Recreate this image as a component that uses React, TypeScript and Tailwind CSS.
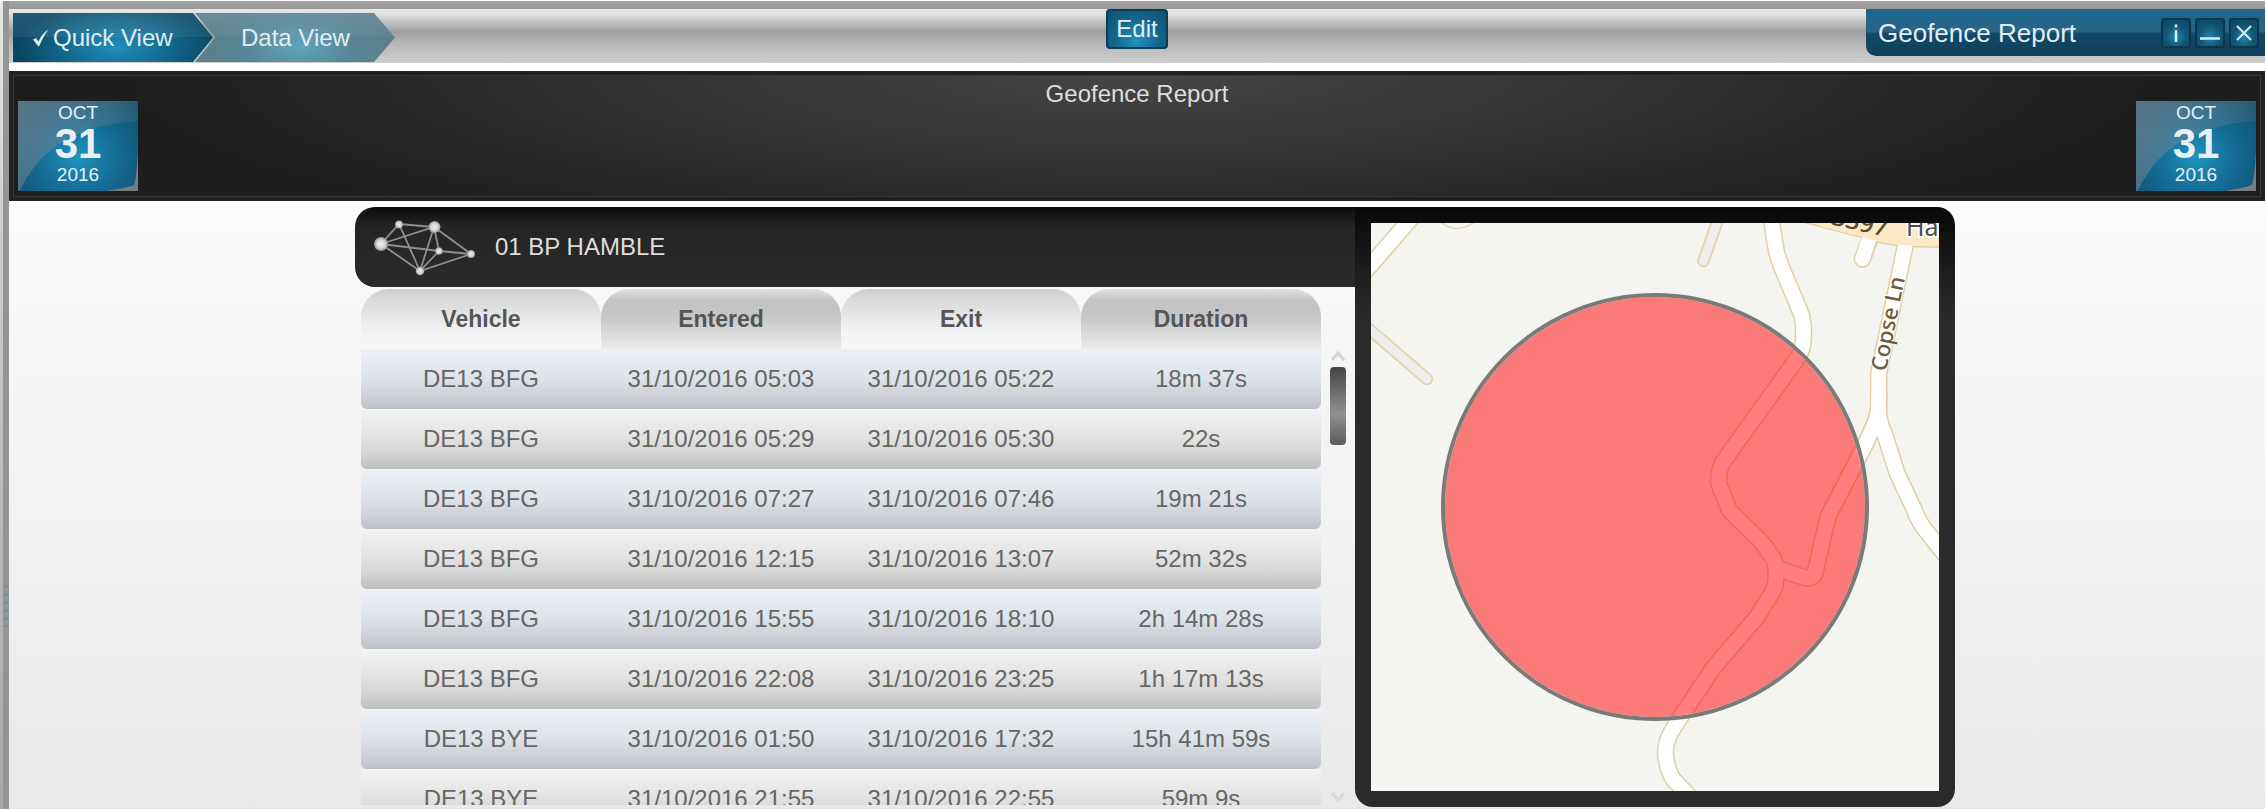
import React from "react";

type Stay = { vehicle: string; entered: string; exit: string; duration: string };

const stays: Stay[] = [
  { vehicle: "DE13 BFG", entered: "31/10/2016 05:03", exit: "31/10/2016 05:22", duration: "18m 37s" },
  { vehicle: "DE13 BFG", entered: "31/10/2016 05:29", exit: "31/10/2016 05:30", duration: "22s" },
  { vehicle: "DE13 BFG", entered: "31/10/2016 07:27", exit: "31/10/2016 07:46", duration: "19m 21s" },
  { vehicle: "DE13 BFG", entered: "31/10/2016 12:15", exit: "31/10/2016 13:07", duration: "52m 32s" },
  { vehicle: "DE13 BFG", entered: "31/10/2016 15:55", exit: "31/10/2016 18:10", duration: "2h 14m 28s" },
  { vehicle: "DE13 BFG", entered: "31/10/2016 22:08", exit: "31/10/2016 23:25", duration: "1h 17m 13s" },
  { vehicle: "DE13 BYE", entered: "31/10/2016 01:50", exit: "31/10/2016 17:32", duration: "15h 41m 59s" },
  { vehicle: "DE13 BYE", entered: "31/10/2016 21:55", exit: "31/10/2016 22:55", duration: "59m 9s" },
];

const headings = ["Vehicle", "Entered", "Exit", "Duration"];

const lightTab = "bg-[linear-gradient(#cfcfcf,#e4e4e4_40%,#f3f3f3_70%,#f8f8f8)]";
const darkTab = "bg-[linear-gradient(#e2e2e2,#c2c2c2_20%,#c6c6c6_45%,#ebebeb)]";
const blueRow = "bg-[linear-gradient(#edf0f6,#dde3e8_50%,#cfd2d8_75%,#bfc2ca)]";
const grayRow = "bg-[linear-gradient(#f2f2f2,#e4e4e4_45%,#d3d3d3_75%,#bfbfbf)]";

function Toolbar() {
  return (
    <header className="grid h-[54px] grid-cols-[1fr_auto_1fr] items-start bg-[linear-gradient(#e9e9e9,#dcdcdc_12%,#9f9f9f_42%,#b4b4b4_60%,#cfcfcf)]">
      <nav className="flex pt-1 pl-1">
        <button className="flex h-[49px] w-[200px] items-center pl-5 text-2xl text-[#e3edf2] [clip-path:polygon(0_0,180px_0,100%_50%,180px_100%,0_100%)] bg-[linear-gradient(#ffffff1a,#ffffff12_50%,transparent_50%),radial-gradient(ellipse_100px_44px_at_52%_70%,#1f8fbb,#13678c_55%,#0a4562)]">
          <svg viewBox="0 0 16 18" className="mr-1 h-[18px] w-4" aria-hidden="true">
            <path d="M0 10.5 L3 9 L5.4 12.5 C8 7 11 3 15.5 0.5 C11.5 5.5 9 10.500 6.300 17 L5 17 Z" fill="#e3edf2" />
          </svg>
          Quick View
        </button>
        <button className="-ml-[18px] flex h-[49px] w-[200px] items-center pl-[46px] text-2xl text-[#e3edf2] [clip-path:polygon(0_0,179px_0,100%_50%,179px_100%,0_100%,20px_50%)] bg-[linear-gradient(#ffffff1a,#ffffff0a_50%,transparent_50%),radial-gradient(ellipse_90px_44px_at_52%_70%,#5fa5ba,#578698_60%,#5b7f8c)]">
          Data View
        </button>
      </nav>
      <button className="h-10 w-[62px] rounded-[4px] border-2 border-[#0a3c55] bg-[radial-gradient(ellipse_at_50%_85%,#1f93c0,#14658a_55%,#0f5070)] text-2xl leading-9 text-[#e3edf2]">
        Edit
      </button>
      <div className="flex h-[47px] w-[399px] items-center justify-between justify-self-end rounded-bl-[10px] bg-[linear-gradient(#1c668f,#2a6485_48%,#0f4a6b_52%,#103f59)] pr-[6px] pl-3">
        <h1 className="text-[26px] leading-none text-[#e3edf2]">Geofence Report</h1>
        <div className="flex gap-1">
          {(["Information", "Minimise", "Close"] as const).map((label) => (
            <button
              key={label}
              aria-label={label}
              className="size-[30px] rounded-[3px] border-2 border-[#0b364b] bg-[radial-gradient(circle_at_50%_65%,#1f86ae,#125775_50%,#0e4560)]"
            >
              <svg viewBox="0 0 26 26" className="size-full" fill="none" stroke="#dcebf2" strokeWidth="2">
                {label === "Information" && <path d="M13 10 V22 M13 4.500 V7.500" strokeWidth="2.5" />}
                {label === "Minimise" && <path d="M3 18.500 H23" strokeWidth="2.500" />}
                {label === "Close" && <path d="M6 6 L20 20 M20 6 L6 20" />}
              </svg>
            </button>
          ))}
        </div>
      </div>
    </header>
  );
}

function DateCard({ id }: { id: string }) {
  return (
    <button className="relative h-[90px] w-[120px] bg-[radial-gradient(ellipse_at_50%_62%,#1e94c0,#15709a_40%,#0f4c69)] text-[#e8f0f4]">
      <svg viewBox="0 0 120 90" className="absolute inset-0 size-full" aria-hidden="true">
        <defs>
          <linearGradient id={id} x1="0" y1="0" x2="1" y2="0.4">
            <stop offset="0" stopColor="#8a8f94" stopOpacity="0.6" />
            <stop offset="1" stopColor="#8a8f94" stopOpacity="0.12" />
          </linearGradient>
        </defs>
        <path d="M0 0 H120 V20 C60 24 22 46 2 90 H0 Z" fill={`url(#${id})`} />
        <path d="M120 50 C119 68 118 78 116 84 C108 87 98 88 88 90 H120 Z" fill="#8a8583" fillOpacity="0.85" />
      </svg>
      <span className="relative flex flex-col items-center pb-1">
        <span className="text-[19px] leading-[20px]">OCT</span>
        <span className="text-[42px] leading-[42px] font-bold">31</span>
        <span className="text-[19px] leading-[20px]">2016</span>
      </span>
    </button>
  );
}

function NetworkIcon() {
  return (
    <svg viewBox="0 0 104 60" className="h-[60px] w-[104px]" aria-hidden="true">
      <defs>
        <radialGradient id="node">
          <stop offset="0" stopColor="#f0f0f0" />
          <stop offset="0.6" stopColor="#d5d5d5" />
          <stop offset="1" stopColor="#909090" />
        </radialGradient>
      </defs>
      <g stroke="#8f8f8f" strokeWidth="1.800" fill="none">
        <path d="M8 27 L26 7 L61 10 L98 37 L47 54 Z M8 27 L61 10 L66 34 L47 54 L61 10 M8 27 L66 34 L98 37 M26 7 L47 54" />
      </g>
      <g fill="url(#node)">
        <circle cx="8" cy="27" r="7" />
        <circle cx="26" cy="7.500" r="4" />
        <circle cx="61.500" cy="10" r="6" />
        <circle cx="66" cy="34" r="3.800" />
        <circle cx="98" cy="37" r="4" />
        <circle cx="47" cy="54" r="4.300" />
      </g>
    </svg>
  );
}

const roads = [
  "M430 -60 Q396 -30 401 0 Q403 16 406 31 Q410 44 416 57 L429 88 Q433 97 432.500 111 Q433 124 428 133 L390 186 L354 236 Q347 246 347.500 260 Q348 262 358 286 Q360 290 388 316 Q398 328 403 337 Q405 342 405 354 Q405 362 402 368 L386 394 L343 444 L307 498 Q299 510 297 516 Q294 524 294.500 532 Q296 546 302 556 L322 577",
  "M536 14 L507.700 150 L507.700 181 Q507 192 504 200 L493 224 L462 284 Q457 292 455 302 L444 350 Q441 357 432 354 L405 345",
  "M507.700 170 V190 Q509 202 514 212 L526 250 L543 286 Q548 300 556 309 L575 333",
  "M505 0 L491.500 36",
  "M50 -16 L-14 58",
];
const tracks = ["M-10 99 L56 156", "M353 -20 L332.500 38"];

function GeofenceMap() {
  return (
    <svg viewBox="0 0 568 568" className="block size-full bg-[#f4f5f0]" role="img" aria-label="Map of the geofence">
      <g fill="none" strokeLinecap="round" strokeLinejoin="round">
        {tracks.map((d) => (
          <path key={d} d={d} stroke="#e3d2ae" strokeWidth="12.500" />
        ))}
        {tracks.map((d) => (
          <path key={d} d={d} stroke="#eeecec" strokeWidth="9" />
        ))}
        <path d="M71 0 Q86 11 102 0" stroke="#e3d2ae" strokeWidth="1.500" />
        {roads.map((d) => (
          <path key={d} d={d} stroke="#e0cfa6" strokeWidth="17.500" />
        ))}
        <path d="M432 -1 L512 20 Q530 24 570 24 V-20 H432 Z" fill="#fde9c6" stroke="#e0cfa6" strokeWidth="1.500" />
        {roads.map((d, i) => (
          <path key={d} d={d} stroke="#ffffff" strokeWidth="14.500" className={i === 3 ? "hidden" : ""} />
        ))}
        <path d="M498 16 L491.500 36" stroke="#ffffff" strokeWidth="14.500" />
        <path d="M450 3.500 L512 19.200 Q530 23.200 570 23.200 V-20 H450 Z" fill="#fde9c6" />
      </g>
      <g fontFamily="'Noto Sans', sans-serif">
        <text
          transform="translate(515 149) rotate(-78.600)"
          fontSize="22"
          fontWeight="500"
          fill="#6f5c3c"
          stroke="#ffffff"
          strokeWidth="2"
          paintOrder="stroke"
        >
          Copse Ln
        </text>
        <text transform="translate(515 14) rotate(13)" textAnchor="end" fontSize="25" fontWeight="500" fill="#5a4a30">
          B3397
        </text>
        <text x="535" y="13" fontSize="25" fill="#4c4c4c" stroke="#ffffff" strokeWidth="3" paintOrder="stroke">
          Ha
        </text>
      </g>
      <circle cx="284" cy="284" r="210" fill="#ff0000" fillOpacity="0.5" />
      <circle cx="284" cy="284" r="212" fill="none" stroke="#7c7a78" strokeWidth="4" />
    </svg>
  );
}

function StayTable() {
  return (
    <div className="flex min-h-0 flex-1 pt-[2px] pl-[6px]">
      <div className="min-w-0 flex-1 overflow-hidden">
        <table className="w-full table-fixed border-separate border-spacing-0 text-center text-2xl text-[#666]">
          <thead>
            <tr>
              {headings.map((h, i) => (
                <th
                  key={h}
                  scope="col"
                  className={`h-[60px] rounded-t-[28px] p-0 text-[23px] font-bold text-[#555] ${i % 2 ? darkTab : lightTab}`}
                >
                  {h}
                </th>
              ))}
            </tr>
          </thead>
          <tbody>
            {stays.map((s, i) => (
              <tr key={s.vehicle + s.entered}>
                {[s.vehicle, s.entered, s.exit, s.duration].map((value, col) => (
                  <td
                    key={col}
                    className={`h-[60px] p-0 first:rounded-bl-[6px] last:rounded-br-[6px] ${i % 2 ? grayRow : blueRow}`}
                  >
                    {value}
                  </td>
                ))}
              </tr>
            ))}
          </tbody>
        </table>
      </div>
      <div className="flex w-[34px] flex-col items-center pt-[62px]">
        <svg viewBox="0 0 14 10" className="h-[10px] w-[14px]" fill="none" stroke="#d2d2d2" strokeWidth="3">
          <path d="M1 9 L7 2 L13 9" />
        </svg>
        <div className="mt-[6px] h-[78px] w-4 rounded-[4px] bg-[linear-gradient(#454545,#909090_60%,#5c5c5c)]" />
        <svg viewBox="0 0 14 10" className="mt-auto mb-[3px] h-[10px] w-[14px]" fill="none" stroke="#d8d8d8" strokeWidth="3">
          <path d="M1 1 L7 8 L13 1" />
        </svg>
      </div>
    </div>
  );
}

export default function App() {
  return (
    <div className="flex h-screen overflow-hidden bg-white pt-px pr-px pb-[3px] font-['Liberation_Sans',Arial,sans-serif]">
      <div className="w-[3px] bg-[linear-gradient(#e8e8e8,#cccccc_30%,#a8a8a8)]" />
      <div className="flex w-[6px] flex-col bg-[#949494]">
        <div className="mt-[584px] h-[42px] bg-[repeating-linear-gradient(#7f8f95_0_3px,#8f979a_3px_8px)]" />
      </div>
      <div className="flex min-w-0 flex-1 flex-col">
        <div className="h-2 bg-[linear-gradient(#a3a3a3,#969696)]" />
        <Toolbar />
        <section className="mt-2 h-[130px] bg-[#202020] p-1">
          <div className="flex h-full items-start justify-between border border-[#383838] bg-[radial-gradient(ellipse_45%_150%_at_50%_0%,#464545,#2f2e2e_60%,#1d1d1d)] px-1">
            <div className="pt-[25px]">
              <DateCard id="gloss-start" />
            </div>
            <h2 className="pt-[2px] text-2xl leading-8 text-[#dedede]">Geofence Report</h2>
            <div className="pt-[25px]">
              <DateCard id="gloss-end" />
            </div>
          </div>
        </section>
        <main className="min-h-0 flex-1 bg-[linear-gradient(#fbfbfb,#e9e9e9)] pt-[6px] pl-9">
          <div className="mx-auto flex h-[600px] w-full max-w-[1600px]">
            <section className="flex min-w-0 flex-1 flex-col pb-[2px]">
              <div className="flex h-20 items-center gap-[18px] rounded-l-[20px] bg-[linear-gradient(#0c0c0c,#252525_25%,#2b2b2b)] pl-[18px]">
                <NetworkIcon />
                <h3 className="text-2xl text-[#dedede]">01 BP HAMBLE</h3>
              </div>
              <StayTable />
            </section>
            <section className="size-[600px] shrink-0 rounded-tr-[18px] rounded-b-[18px] bg-[linear-gradient(#080808,#2a2a2a_18%)] p-4">
              <GeofenceMap />
            </section>
          </div>
        </main>
      </div>
    </div>
  );
}
